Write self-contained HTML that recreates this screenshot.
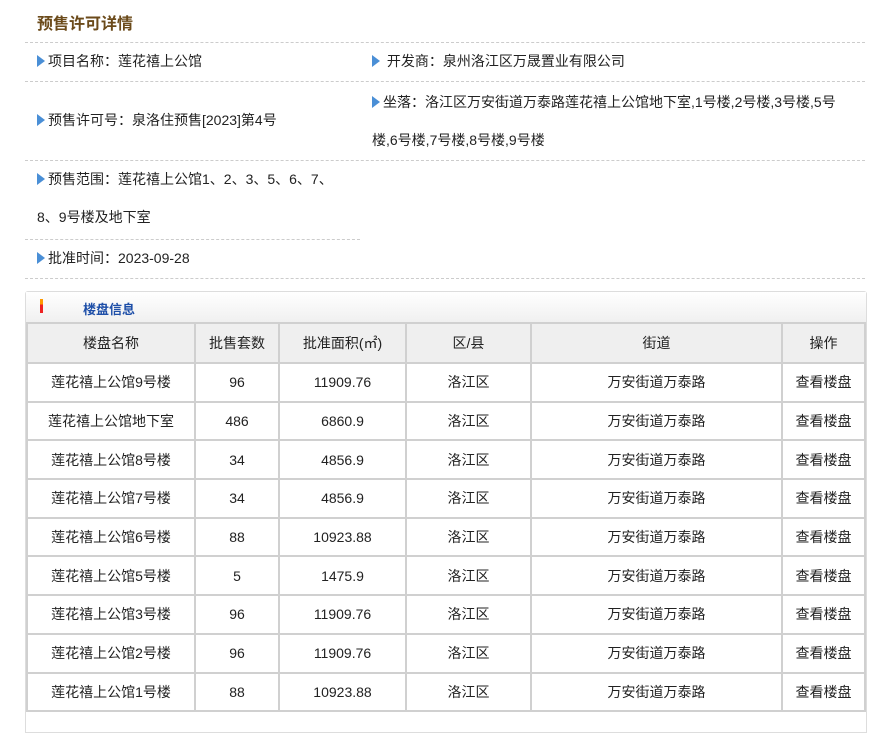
<!DOCTYPE html>
<html><head><meta charset="utf-8"><style>
body{margin:0;background:#fff;font-family:"Liberation Sans","Noto Sans CJK SC",sans-serif;font-size:14px;color:#222;width:881px;height:719px;overflow:hidden;position:relative}
.abs{position:absolute}
.title{left:37px;top:10px;font-size:16px;font-weight:bold;color:#6b4a1a}
.dl{position:absolute;height:0;border-top:1px dashed #ccc}
.it{position:absolute;font-size:14px;line-height:38px;color:#222}
.tri{display:inline-block;width:0;height:0;border-top:6px solid transparent;border-bottom:6px solid transparent;border-left:8px solid #4a8fd6;margin-right:3px;vertical-align:-1px}
.box{position:absolute;left:25px;top:291px;width:840px;height:440px;border:1px solid #ddd;border-radius:3px 3px 0 0}
.bar{height:30px;background:linear-gradient(#fff,#f0f0f0);border-bottom:1px solid #ddd;position:relative}
table{border-collapse:collapse;position:absolute;left:26px;top:322px;width:840px;font-size:14px;text-align:center}
td,th{border:2px solid #d0d0d0;height:36.7px;padding:0;font-weight:normal}
th{background:#efefef;height:38px}
</style></head><body>
<div class="abs title">预售许可详情</div>
<div class="dl" style="left:25px;top:42px;width:840px"></div>
<div class="it" style="left:37px;top:42px"><span class="tri"></span>项目名称：莲花禧上公馆</div>
<div class="it" style="left:372px;top:42px"><span class="tri"></span> 开发商：泉州洛江区万晟置业有限公司</div>
<div class="dl" style="left:25px;top:81px;width:840px"></div>
<div class="it" style="left:37px;top:101px"><span class="tri"></span>预售许可号：泉洛住预售[2023]第4号</div>
<div class="it" style="left:372px;top:83px;width:474px"><span class="tri"></span>坐落：洛江区万安街道万泰路莲花禧上公馆地下室,1号楼,2号楼,3号楼,5号楼,6号楼,7号楼,8号楼,9号楼</div>
<div class="dl" style="left:25px;top:160px;width:840px"></div>
<div class="it" style="left:37px;top:160px;width:312px"><span class="tri"></span>预售范围：莲花禧上公馆1、2、3、5、6、7、8、9号楼及地下室</div>
<div class="dl" style="left:25px;top:239px;width:335px"></div>
<div class="it" style="left:37px;top:239px"><span class="tri"></span>批准时间：2023-09-28</div>
<div class="dl" style="left:25px;top:278px;width:840px"></div>
<div class="box"><div class="bar">
<div class="abs" style="left:14px;top:7px;width:3px;height:14px;background:linear-gradient(#f90 40%,#e22 40%)"></div>
<div class="abs" style="left:57px;top:7px;font-size:13px;font-weight:bold;color:#1e4fa8">楼盘信息</div></div></div>
<table>
<colgroup><col style="width:168px"><col style="width:84px"><col style="width:127px"><col style="width:125px"><col style="width:251px"><col></colgroup>
<tr><th>楼盘名称</th><th>批售套数</th><th>批准面积(㎡)</th><th>区/县</th><th>街道</th><th>操作</th></tr>
<tr><td>莲花禧上公馆9号楼</td><td>96</td><td>11909.76</td><td>洛江区</td><td>万安街道万泰路</td><td>查看楼盘</td></tr>
<tr><td>莲花禧上公馆地下室</td><td>486</td><td>6860.9</td><td>洛江区</td><td>万安街道万泰路</td><td>查看楼盘</td></tr>
<tr><td>莲花禧上公馆8号楼</td><td>34</td><td>4856.9</td><td>洛江区</td><td>万安街道万泰路</td><td>查看楼盘</td></tr>
<tr><td>莲花禧上公馆7号楼</td><td>34</td><td>4856.9</td><td>洛江区</td><td>万安街道万泰路</td><td>查看楼盘</td></tr>
<tr><td>莲花禧上公馆6号楼</td><td>88</td><td>10923.88</td><td>洛江区</td><td>万安街道万泰路</td><td>查看楼盘</td></tr>
<tr><td>莲花禧上公馆5号楼</td><td>5</td><td>1475.9</td><td>洛江区</td><td>万安街道万泰路</td><td>查看楼盘</td></tr>
<tr><td>莲花禧上公馆3号楼</td><td>96</td><td>11909.76</td><td>洛江区</td><td>万安街道万泰路</td><td>查看楼盘</td></tr>
<tr><td>莲花禧上公馆2号楼</td><td>96</td><td>11909.76</td><td>洛江区</td><td>万安街道万泰路</td><td>查看楼盘</td></tr>
<tr><td>莲花禧上公馆1号楼</td><td>88</td><td>10923.88</td><td>洛江区</td><td>万安街道万泰路</td><td>查看楼盘</td></tr>
</table>
</body></html>
